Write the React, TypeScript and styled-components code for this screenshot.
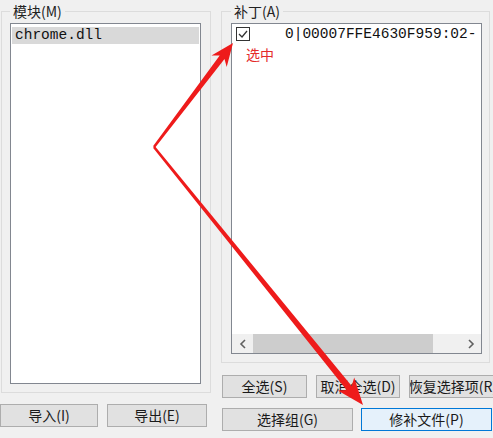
import styled, { createGlobalStyle } from 'styled-components'

const GlobalStyle = createGlobalStyle`
  body {
    margin: 0;
    background: #f0f0f0;
  }
`

const Window = styled.div`
  position: relative;
  width: 493px;
  height: 438px;
  overflow: hidden;
  background: #f0f0f0;
  display: flex;
  font-family: "Noto Sans CJK SC", sans-serif;
  color: #1a1a1a;
`

const Column = styled.div<{ $width: number; $left: number }>`
  display: flex;
  flex-direction: column;
  flex-shrink: 0;
  width: ${p => p.$width}px;
  margin-left: ${p => p.$left}px;
`

const Group = styled.fieldset<{ $inset: number; $padLeft: number; $padRight: number }>`
  margin: 3px 0 0 ${p => p.$inset}px;
  padding: 4px ${p => p.$padRight}px 8px ${p => p.$padLeft}px;
  border: 1px solid #dcdcdc;
  min-width: 0;
  align-self: flex-start;
`

const Legend = styled.legend`
  padding: 0 3px;
  font-size: 14px;
  line-height: 16px;
  color: #222;
`

const ListBox = styled.div<{ $width: number; $height: number }>`
  box-sizing: border-box;
  width: ${p => p.$width}px;
  height: ${p => p.$height}px;
  border: 1px solid #828790;
  background: #fff;
  display: flex;
  flex-direction: column;
  overflow: hidden;
  padding-top: 3px;
`

const ModuleItem = styled.div<{ $selected?: boolean }>`
  margin: 0 1px;
  height: 17px;
  padding-left: 3px;
  background: ${p => (p.$selected ? '#d9d9d9' : 'transparent')};
  font-family: "Liberation Mono", monospace;
  font-size: 14.5px;
  line-height: 17px;
  color: #111;
  white-space: nowrap;
`

const PatchRow = styled.div`
  display: flex;
  align-items: center;
  height: 14px;
  padding-left: 4px;
`

const CheckBox = styled.span`
  box-sizing: border-box;
  flex-shrink: 0;
  width: 14px;
  height: 14px;
  border: 1px solid #333;
  background: #fff;
  display: flex;
  align-items: center;
  justify-content: center;
`

const PatchText = styled.span`
  margin-left: 35px;
  font-family: "Liberation Mono", monospace;
  font-size: 14.5px;
  line-height: 14px;
  color: #111;
  white-space: nowrap;
`

const HScroll = styled.div`
  margin-top: auto;
  height: 19px;
  display: flex;
  align-items: stretch;
  background: #f0f0f0;
  flex-shrink: 0;
`

const ScrollArrow = styled.div`
  width: 21px;
  display: flex;
  align-items: center;
  justify-content: center;
`

const Track = styled.div`
  flex: 1;
  display: flex;
  align-items: stretch;
`

const Thumb = styled.div`
  width: 180px;
  background: #cdcdcd;
`

const ButtonRow = styled.div<{ $top: number; $left: number; $gap: number }>`
  display: flex;
  gap: ${p => p.$gap}px;
  margin-top: ${p => p.$top}px;
  margin-left: ${p => p.$left}px;
`

const Button = styled.div<{ $width: number; $focused?: boolean }>`
  box-sizing: border-box;
  flex-shrink: 0;
  width: ${p => p.$width}px;
  height: 23px;
  border: 1px solid ${p => (p.$focused ? '#0078d7' : '#adadad')};
  background: ${p => (p.$focused ? '#e5f1fb' : '#e1e1e1')};
  display: flex;
  align-items: center;
  justify-content: center;
  overflow: hidden;
  white-space: nowrap;
  font-size: 14px;
  line-height: 21px;
  color: #1a1a1a;
`

const Overlay = styled.svg`
  position: absolute;
  left: 0;
  top: 0;
  pointer-events: none;
`

const Note = styled.span`
  position: absolute;
  left: 246px;
  top: 46px;
  font-size: 14px;
  line-height: 16px;
  color: #e42b2b;
`

type Pt = [number, number]

// shaft tapering from the apex to a notched arrow head at the tip
const arrow = (a: Pt, t: Pt, headLen: number, headHalf: number, w0: number, w1: number) => {
  const dx = t[0] - a[0]
  const dy = t[1] - a[1]
  const len = Math.hypot(dx, dy)
  const ux = dx / len
  const uy = dy / len
  const nx = -uy
  const ny = ux
  const bx = t[0] - ux * headLen
  const by = t[1] - uy * headLen
  const sx = t[0] - ux * (headLen - 5)
  const sy = t[1] - uy * (headLen - 5)
  const pts: Pt[] = [
    [a[0] + nx * w0 / 2, a[1] + ny * w0 / 2],
    [sx + nx * w1 / 2, sy + ny * w1 / 2],
    [bx + nx * headHalf, by + ny * headHalf],
    t,
    [bx - nx * headHalf, by - ny * headHalf],
    [sx - nx * w1 / 2, sy - ny * w1 / 2],
    [a[0] - nx * w0 / 2, a[1] - ny * w0 / 2],
  ]
  return pts.map(p => `${p[0].toFixed(1)},${p[1].toFixed(1)}`).join(' ')
}

const Chevron = ({ dir }: { dir: 'left' | 'right' }) => (
  <svg width="8" height="10" viewBox="0 0 8 10">
    <path
      d={dir === 'left' ? 'M6 1 L2 5 L6 9' : 'M2 1 L6 5 L2 9'}
      fill="none"
      stroke="#606060"
      strokeWidth="1.6"
    />
  </svg>
)

const App = () => {
  const apex: Pt = [154, 147]
  return (
    <>
      <GlobalStyle />
      <Window>
        <Column $width={211} $left={0}>
          <Group $inset={1} $padLeft={8} $padRight={9}>
            <Legend>模块(M)</Legend>
            <ListBox $width={191} $height={361}>
              <ModuleItem $selected>chrome.dll</ModuleItem>
            </ListBox>
          </Group>
          <ButtonRow $top={11} $left={0} $gap={9}>
            <Button $width={98}>导入(I)</Button>
            <Button $width={100}>导出(E)</Button>
          </ButtonRow>
        </Column>

        <Column $width={272} $left={10}>
          <Group $inset={0} $padLeft={9} $padRight={7}>
            <Legend>补丁(A)</Legend>
            <ListBox $width={251} $height={331}>
              <PatchRow>
                <CheckBox>
                  <svg width="10" height="8" viewBox="0 0 10 8">
                    <path d="M1 4 L4 7 L9 1" fill="none" stroke="#333" strokeWidth="1.3" />
                  </svg>
                </CheckBox>
                <PatchText>0|00007FFE4630F959:02-</PatchText>
              </PatchRow>
              <HScroll>
                <ScrollArrow>
                  <Chevron dir="left" />
                </ScrollArrow>
                <Track>
                  <Thumb />
                </Track>
                <ScrollArrow>
                  <Chevron dir="right" />
                </ScrollArrow>
              </HScroll>
            </ListBox>
          </Group>
          <ButtonRow $top={12} $left={1} $gap={9}>
            <Button $width={85}>全选(S)</Button>
            <Button $width={84}>取消全选(D)</Button>
            <Button $width={88}>恢复选择项(R)</Button>
          </ButtonRow>
          <ButtonRow $top={10} $left={1} $gap={8}>
            <Button $width={131}>选择组(G)</Button>
            <Button $width={131} $focused>修补文件(P)</Button>
          </ButtonRow>
        </Column>

        <Note>选中</Note>
        <Overlay width="493" height="438" viewBox="0 0 493 438">
          <polygon points={arrow(apex, [233, 43], 23, 9.5, 2.5, 6)} fill="#ee1b1b" />
          <polygon points={arrow(apex, [363, 405], 27, 10.5, 2.5, 6.5)} fill="#ee1b1b" />
        </Overlay>
      </Window>
    </>
  )
}

export default App
